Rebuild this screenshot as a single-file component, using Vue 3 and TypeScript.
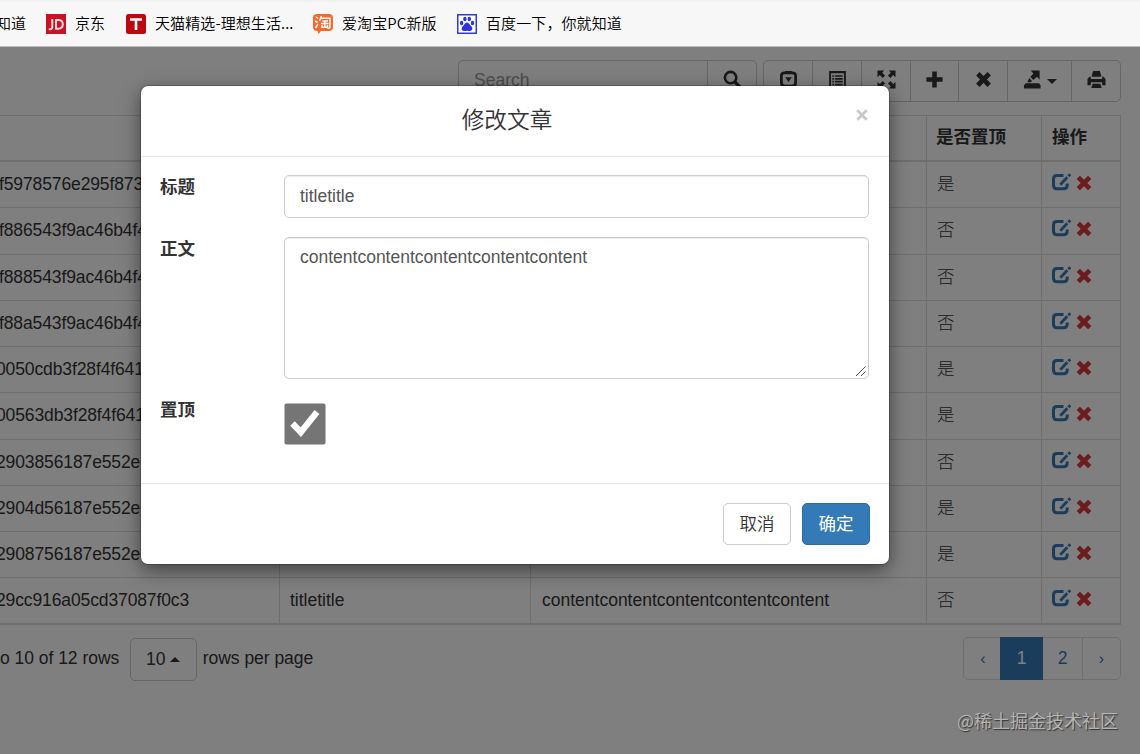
<script setup lang="ts">
interface Row { id: string; shift: number; title: string; content: string; top: boolean }

const title = 'titletitle'
const content = 'contentcontentcontentcontentcontent'
const make = (id: string, shift: number, top: boolean): Row => ({ id, shift, title, content, top })

const rows: Row[] = [
  make('f5978576e295f873', -1, true),
  make('f886543f9ac46b4f4', -1, false),
  make('f888543f9ac46b4f4', -1, false),
  make('f88a543f9ac46b4f4', -1, false),
  make('0050cdb3f28f4f641', -4, true),
  make('00563db3f28f4f641', -4, true),
  make('2903856187e552e0', -4, false),
  make('2904d56187e552e0', -4, true),
  make('2908756187e552e0', -4, true),
  make('29cc916a05cd37087f0c3', -4, false),
]
</script>

<template>
  <div class="window">
    <header class="bookmarks">
      <span class="mark first">知道</span>
      <span class="mark jd">
        <svg class="fav" viewBox="0 0 20 20"><rect width="20" height="20" fill="#c81225" /><path d="M6.300 5v8q0 2.500-3.500 2.300M10 6v8.700h2.200q4.600 0 4.600-4.400T12.200 6z" fill="none" stroke="#f6d5d8" stroke-width="2" /></svg>
        <span class="label">京东</span>
      </span>
      <span class="mark tmall">
        <svg class="fav" viewBox="0 0 20 20"><rect width="20" height="20" rx="2.500" fill="#be0710" /><path d="M4 5.500h12M10 5.500V16" fill="none" stroke="#fff" stroke-width="2.600" /></svg>
        <span class="label">天猫精选-理想生活...</span>
      </span>
      <span class="mark taobao">
        <svg class="fav" viewBox="0 0 20 20"><path d="M4 0h12q4 0 4 4v9q0 4-4 4H8l-2.500 3-1-3Q0 17 0 13V4Q0 0 4 0z" fill="#f5692c" /><path d="M3 3l2 1.500M2 7l2.500 1.500M2.500 14l2.500-4M8.500 2L6.500 7M8 4.200h9v8.500q0 2-2.500 1.500M9.500 7h5.500M8 9.500h7.500M11.800 7v6M9 11v2.300h5.500V11" fill="none" stroke="#fff" stroke-width="1.500" /></svg>
        <span class="label">爱淘宝PC新版</span>
      </span>
      <span class="mark baidu">
        <svg class="fav" viewBox="0 0 20 20"><rect x=".75" y=".75" width="18.500" height="18.500" fill="#fff" stroke="#3038d8" stroke-width="1.500" /><g fill="#2b34da"><ellipse cx="4.600" cy="9" rx="1.700" ry="2.200" /><ellipse cx="7.900" cy="5" rx="1.700" ry="2.300" /><ellipse cx="12.300" cy="5" rx="1.700" ry="2.300" /><ellipse cx="15.500" cy="9" rx="1.700" ry="2.200" /><path d="M10 8.500c2.200 0 2.500 2.300 4 3.600 2.300 2 1.300 5-1 5-1.300 0-2-.4-3-.4s-1.700.4-3 .4c-2.300 0-3.300-3-1-5 1.500-1.300 1.800-3.600 4-3.600z" /></g></svg>
        <span class="label">百度一下，你就知道</span>
      </span>
    </header>

    <main class="page">
      <div class="toolbar">
        <div class="search">
          <span class="search-input">Search</span>
          <span class="search-btn"><svg class="gi" viewBox="0 0 20 20"><circle cx="8" cy="8" r="6" fill="none" stroke="currentColor" stroke-width="2.700" /><path d="M12 12l6 6" stroke="currentColor" stroke-width="3.600" /></svg></span>
        </div>
        <div class="group">
          <span class="tool w49"><svg class="gi" viewBox="0 0 20 20"><path d="M7 1h6l1.500 1.500h-9z" fill="currentColor" /><path d="M6 3h8q3.500 0 3.500 3v7q0 4-3.500 4H6q-3.500 0-3.500-4V6q0-3 3.500-3z" fill="none" stroke="currentColor" stroke-width="2.900" /><path d="M6.500 7.500h7L10 12.500z" fill="currentColor" /></svg></span>
          <span class="tool w49"><svg class="gi" viewBox="0 0 20 20"><path d="M2.200 2h15.600v17H2.200z" fill="none" stroke="currentColor" stroke-width="2" /><path d="M2 2.500h16M4.500 6.300h2M7.500 6.300h8M4.500 9.300h2M7.500 9.300h8M4.500 12.300h2M7.500 12.300h8M4.500 15.300h2M7.500 15.300h8" stroke="currentColor" stroke-width="1.800" /></svg></span>
          <span class="tool w49"><svg class="gi" viewBox="0 0 20 20"><path d="M.5.500H7.500L5.500 2.800l3 3L6 8.300l-3-3-2.500 2.200zM19.500.500v7L17 5.300l-3 3-2.500-2.500 3-3-2-2.300zM.5 19.500v-7L3 14.700l3-3 2.500 2.500-3 3 2 2.300zM19.500 19.500h-7l2-2.300-3-3 2.500-2.500 3 3 2.500-2.200z" fill="currentColor" /></svg></span>
          <span class="tool w48"><svg class="gi" viewBox="0 0 20 20"><path d="M10 1.500v17M1.500 10h17" stroke="currentColor" stroke-width="4.800" /></svg></span>
          <span class="tool w49"><svg class="gi" viewBox="0 0 20 20"><path d="M4 4l12 12M16 4L4 16" stroke="currentColor" stroke-width="5" /></svg></span>
          <span class="tool w64"><svg class="gi" viewBox="0 0 20 20"><path d="M8 .5h9.500V10l-3-3-3.500 3.500-3.300-3.200L11 3.700zM6.500 8.500l3 3L8 13H4.500zM3 14h14l1.500 2v3.500H1V16z" fill="currentColor" /></svg><i class="caret"></i></span>
          <span class="tool print"><svg class="gi" viewBox="0 0 20 20"><path d="M6.500 1h7L15 6v1H5V6zM2.500 7H4v2.500h12V7h1.500L19.500 9.500V16H16v-3H4v3H.5V9.500zM6 14.500h8l1.500 4.500h-11z" fill="currentColor" /></svg></span>
        </div>
      </div>

      <div class="table">
        <div class="row head">
          <div class="cell c-id"></div><div class="cell c-title"></div><div class="cell c-content"></div>
          <div class="cell c-top">是否置顶</div><div class="cell c-act">操作</div>
        </div>
        <div v-for="r in rows" :key="r.id" class="row">
          <div class="cell c-id"><span :style="{ marginLeft: r.shift + 'px' }">{{ r.id }}</span></div>
          <div class="cell c-title">{{ r.title }}</div>
          <div class="cell c-content">{{ r.content }}</div>
          <div class="cell c-top">{{ r.top ? '是' : '否' }}</div>
          <div class="cell c-act">
            <svg class="act edit" viewBox="0 0 19 18"><path d="M11.500 2.400H5Q1.500 2.400 1.500 6v6.300Q1.500 15.800 5 15.800h6.500q3.700 0 3.700-3.500V10.500" fill="none" stroke="currentColor" stroke-width="3" /><path d="M8.300 11.700L15.300 4.300" stroke="currentColor" stroke-width="2.800" /><path d="M16.300 3.200L18.300 1.200" stroke="currentColor" stroke-width="2.800" /></svg>
            <svg class="act del" viewBox="0 0 16 16"><path d="M2.300 2.300l11.400 11.400M13.700 2.300L2.300 13.700" stroke="currentColor" stroke-width="4.600" /></svg>
          </div>
        </div>
      </div>

      <div class="foot">
        <div class="info">
          <span>o 10 of 12 rows</span>
          <span class="size">10<i class="caret up"></i></span>
          <span>rows per page</span>
        </div>
        <div class="pager">
          <span class="pg prev">‹</span><span class="pg on">1</span><span class="pg two">2</span><span class="pg next">›</span>
        </div>
      </div>

      <div class="backdrop"></div>
      <section class="modal">
        <div class="m-head">
          <span class="m-title">修改文章</span>
          <svg class="close" viewBox="0 0 12 12"><path d="M1.300 1.300l9.400 9.400M10.700 1.300L1.300 10.700" stroke="#c9c9c9" stroke-width="2.800" /></svg>
        </div>
        <div class="m-body">
          <div class="field"><label>标题</label><div class="control input">{{ title }}</div></div>
          <div class="field"><label>正文</label>
            <div class="control area"><span>{{ content }}</span><svg class="grip" viewBox="0 0 12 12"><path d="M1 11L10.500 1.500M6 11l4.500-4.500" stroke="#555" stroke-width="1" /></svg></div>
          </div>
          <div class="field"><label>置顶</label>
            <svg class="check" viewBox="0 0 42 42"><rect x=".5" y=".5" width="41" height="41" rx="2" fill="#757575" /><path d="M8.500 20.500l8.300 8.700L33 9" fill="none" stroke="#fff" stroke-width="6.200" /></svg>
          </div>
        </div>
        <div class="m-foot"><span class="btn">取消</span><span class="btn primary">确定</span></div>
      </section>
      <div class="watermark">@稀土掘金技术社区</div>
    </main>
  </div>
</template>

<style>
body { margin: 0; overflow: hidden; }
</style>

<style scoped>
* { box-sizing: border-box; }
.window { width: 1140px; height: 754px; overflow: hidden; display: flex; flex-direction: column; font-family: "Liberation Sans", "Noto Sans CJK SC", sans-serif; font-size: 17.500px; line-height: 25px; color: #333; background: #fff; }
.bookmarks { height: 47px; flex: none; display: flex; align-items: center; background: #f7f7f7; border-top: 2px solid #f2f2f2; border-bottom: 1px solid #bdbdbd; font-family: "Noto Sans CJK SC", sans-serif; font-weight: 350; font-size: 15px; letter-spacing: .1px; color: #000; white-space: nowrap; }
.mark { display: flex; align-items: center; gap: 9px; flex: none; }
.fav { width: 20px; height: 20px; }
.label { padding-bottom: 3px; }
.first { width: 46px; margin-left: -4px; padding-bottom: 3px; }
.first + .mark { margin-left: 4px; }
.jd { width: 80px; }
.tmall { width: 187px; }
.taobao { width: 144px; }
.page { position: relative; flex: 1; overflow: hidden; }
.toolbar { display: flex; justify-content: flex-end; gap: 6px; padding: 13px 19px 0 0; height: 68px; }
.search, .group { display: flex; height: 42px; border: 1px solid #ccc; border-radius: 5px; }
.search { width: 299px; }
.search-input { flex: 1; padding: 7px 15px; color: #999; }
.search-btn { width: 49px; border-left: 1px solid #ccc; display: flex; justify-content: center; align-items: center; }
.gi { width: 19px; height: 19px; margin-top: -3px; flex: none; }
.group { width: 358px; }
.tool { display: flex; align-items: center; justify-content: center; border-right: 1px solid #ccc; }
.tool:last-child { border-right: 0; flex: 1; }
.w49 { width: 49px; }
.w48 { width: 48px; }
.w64 { width: 64px; gap: 5px; }
.caret { border: 5px solid transparent; border-top-color: currentColor; border-bottom: 0; }
.caret.up { border-top: 0; border-bottom: 5px solid currentColor; }
.table { width: 1121px; border-top: 1px solid #ddd; }
.row { display: flex; height: 46.250px; border-bottom: 1px solid #ddd; }
.row.head { height: 46px; border-bottom-width: 2px; font-weight: 700; }
.row:last-child { border-bottom-width: 2px; }
.cell { padding: 10px 0 0 10px; border-right: 1px solid #ddd; white-space: nowrap; overflow: hidden; }
.c-id { width: 280px; padding-left: 0; letter-spacing: -.12px; }
.c-title { width: 251px; }
.c-content { width: 396px; padding-left: 11px; }
.c-top { width: 115px; font-weight: 300; }
.c-act { width: 79px; display: flex; align-items: flex-start; gap: 5px; }
.head .cell { display: block; font-weight: 700; padding-top: 9px; }
.head .c-top { padding-left: 9px; }
.act { flex: none; }
.edit { width: 19px; height: 18px; margin-top: 1px; color: #337ab7; }
.del { width: 16px; height: 16px; margin-top: 3px; color: #d9363c; }
.foot { display: flex; justify-content: space-between; padding: 12px 19px 0 0; }
.info { display: flex; align-items: center; height: 43px; }
.size { width: 67px; height: 43px; margin: 2px 6px 0 10.500px; border: 1px solid #ccc; border-radius: 5px; display: flex; align-items: center; justify-content: center; gap: 5px; }
.info { letter-spacing: -.03px; }
.pager { display: flex; height: 43px; width: 158px; border: 1px solid #ddd; border-radius: 5px; color: #337ab7; }
.pg { display: flex; align-items: center; justify-content: center; }
.prev { width: 36px; padding-left: 2px; }
.prev, .next { font-size: 16px; }
.on { width: 43px; margin: -1px 0; background: #337ab7; color: #fff; }
.two { width: 40px; border-right: 1px solid #ddd; }
.next { flex: 1; }
.backdrop { position: absolute; inset: 0; background: rgba(0, 0, 0, .5); }
.modal { position: absolute; left: 141px; top: 39px; width: 748px; height: 478px; background: #fff; border-radius: 7px; box-shadow: 0 6px 19px rgba(0, 0, 0, .5), 0 0 0 1px rgba(0, 0, 0, .2); display: flex; flex-direction: column; }
.m-head { height: 71px; border-bottom: 1px solid #e5e5e5; display: flex; padding: 18px 21px 0 19px; }
.m-title { flex: 1; text-align: center; font-size: 22.700px; line-height: 32px; font-weight: 350; padding-right: 2px; }
.close { width: 12px; height: 12px; margin-top: 5px; }
.m-body { height: 326px; padding: 18px 20px 0 18px; }
.field { display: flex; align-items: flex-start; }
.field label { width: 125px; padding-left: 1px; font-weight: 700; }
.control { width: 585px; border: 1px solid #ccc; border-radius: 5px; color: #555; padding: 8px 15px; box-shadow: inset 0 1px 1px rgba(0, 0, 0, .075); }
.input { height: 43px; margin-bottom: 19px; }
.area { height: 142px; margin-bottom: 19px; padding: 7px 1px 1px 15px; display: flex; }
.area span { flex: 1; }
.grip { width: 12px; height: 12px; align-self: flex-end; }
.check { width: 42px; height: 42px; margin-top: 4.500px; }
.m-foot { flex: 1; border-top: 1px solid #e5e5e5; display: flex; justify-content: flex-end; gap: 11px; padding: 19px 19px 0 0; }
.btn { width: 68px; height: 42px; border: 1px solid #ccc; border-radius: 5px; text-align: center; line-height: 40px; font-weight: 350; }
.primary { background: #337ab7; border-color: #2e6da4; color: #fff; font-weight: 400; }
.watermark { position: absolute; right: 22px; bottom: 21px; color: #b4b4b4; text-shadow: 1px 1px 1px #333; font-size: 18px; font-family: "Noto Sans CJK SC", sans-serif; }
</style>
